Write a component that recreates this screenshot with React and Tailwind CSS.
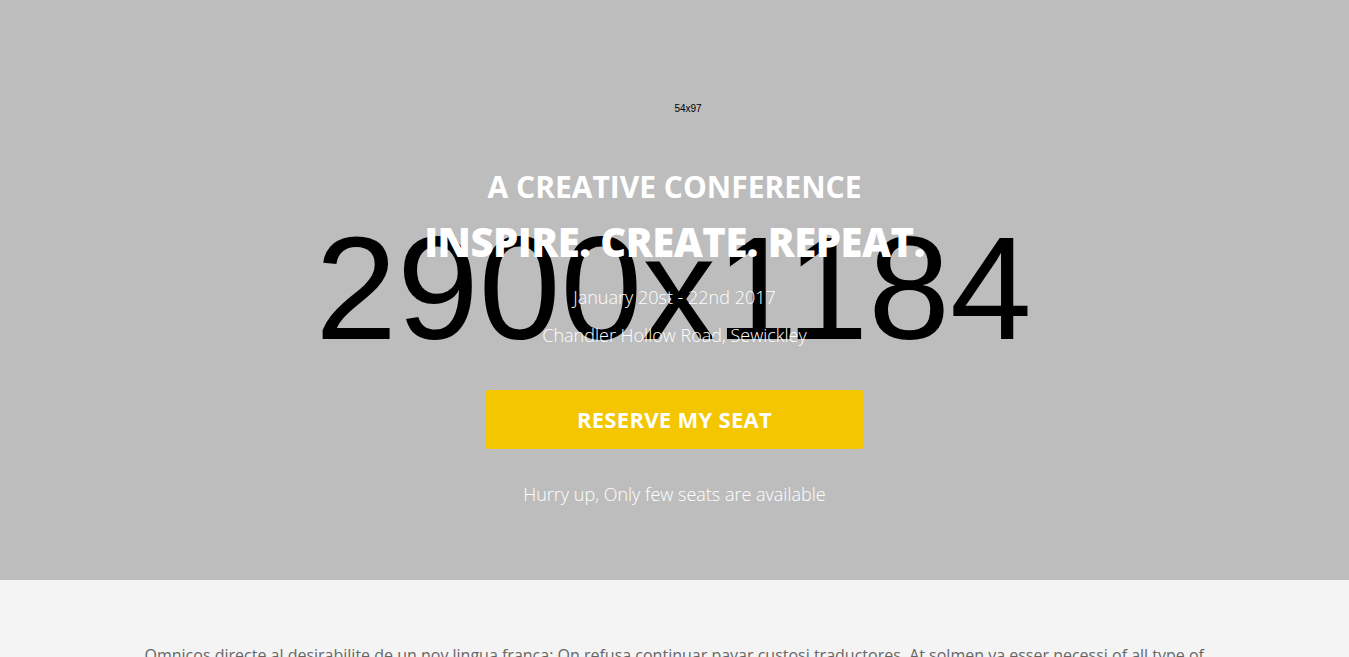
import React from 'react';

const openSans = { fontFamily: '"Open Sans", "Liberation Sans", sans-serif' };

function Hero() {
  return (
    <section className="relative h-[580px] bg-[#bdbdbd] overflow-hidden">
      {/* placeholder background image label */}
      <div className="absolute inset-0 flex items-center justify-center pointer-events-none">
        <span className="text-[147px] leading-none text-black font-['Liberation_Sans',Arial,sans-serif] ml-[-2px] mt-[-4px]">
          2900x1184
        </span>
      </div>

      <div className="relative flex flex-col items-center text-white" style={openSans}>
        {/* logo placeholder */}
        <div className="mt-[60px] ml-[27px] w-[54px] h-[97px] flex items-center justify-center">
          <span className="text-[10px] text-black font-['Liberation_Sans',Arial,sans-serif]">54x97</span>
        </div>

        <h3 className="mt-[11px] text-[30px] leading-[38px] font-bold">A CREATIVE CONFERENCE</h3>
        <h1 className="mt-[10px] text-[40px] leading-[52px] font-extrabold tracking-[-0.5px]">INSPIRE. CREATE. REPEAT.</h1>
        <p className="mt-[16px] text-[18px] leading-[26px] font-light">January 20st - 22nd 2017</p>
        <p className="mt-[12px] text-[18px] leading-[26px] font-light">Chandler Hollow Road, Sewickley</p>

        <button className="mt-[42px] w-[379px] h-[59px] rounded-[4px] bg-[#f3c600] text-white text-[22px] font-bold tracking-[0.3px]">
          RESERVE MY SEAT
        </button>

        <p className="mt-[32px] text-[18px] leading-[26px] font-light">Hurry up, Only few seats are available</p>
      </div>
    </section>
  );
}

export default function App() {
  return (
    <div className="min-h-screen bg-[#f4f4f4]">
      <Hero />
      <section className="bg-[#f4f4f4] pt-[62px] pb-16">
        <div className="w-[1060px] mx-auto" style={openSans}>
          <p className="text-[16px] leading-[26px] text-[#666666]">
            Omnicos directe al desirabilite de un nov lingua franca: On refusa continuar payar custosi traductores. At solmen va esser necessi of all type of
            uniform grammatica, pronunciation e plu sommun paroles. Ma quande lingues coalesce, li grammatica del resultant lingue es plu simplic e regulari
            quam ti del coalescent lingues.
          </p>
        </div>
      </section>
    </div>
  );
}
